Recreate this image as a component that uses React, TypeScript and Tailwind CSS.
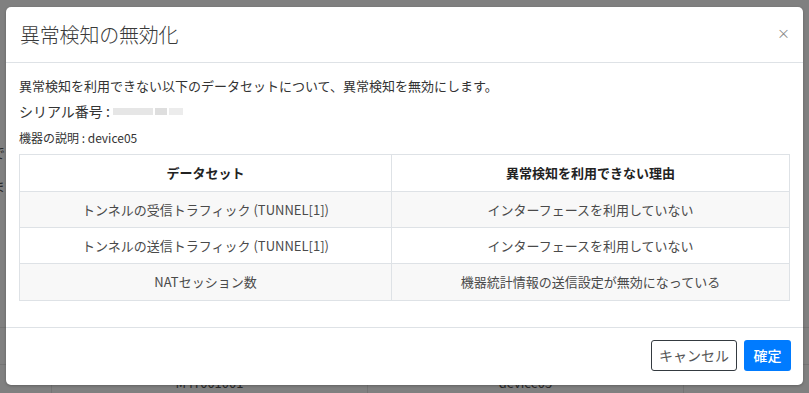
import React from "react";

const rows = [
  { ds: "トンネルの受信トラフィック (TUNNEL[1])", reason: "インターフェースを利用していない", striped: true },
  { ds: "トンネルの送信トラフィック (TUNNEL[1])", reason: "インターフェースを利用していない", striped: false },
  { ds: "NATセッション数", reason: "機器統計情報の送信設定が無効になっている", striped: true },
];

export default function App() {
  return (
    <div
      className="relative w-[809px] h-[393px] overflow-hidden bg-[#808080] text-[#333]"
      style={{ fontFamily: '"Noto Sans CJK JP", "Noto Sans", sans-serif' }}
    >
      {/* dimmed background page */}
      <div className="flex flex-col w-full h-full text-[#2a2a2a]">
        <div className="h-[146px]" />
        <div className="ml-[-9px] text-[14px] leading-[20px] h-[36px]">でき</div>
        <div className="ml-[-9px] text-[14px] leading-[20px] h-[155px]">ます</div>
        <div className="h-[39px] border-t border-[#747474]" />
        <div className="flex-1 border-t border-[#747474] flex text-[13px] text-[#2a2a2a]">
          <div className="w-[52px] border-r border-[#747474]" />
          <div className="w-[316px] border-r border-[#747474] flex justify-center pt-[8px]">M4Y001001</div>
          <div className="w-[316px] border-r border-[#747474] flex justify-center pt-[8px]">device05</div>
          <div className="flex-1" />
        </div>
      </div>

      {/* modal */}
      <div className="absolute left-[6px] top-[7px] w-[797px] h-[378px] bg-white rounded-[5px] shadow-[0_1px_3px_rgba(0,0,0,0.25)] flex flex-col">
        <div className="h-[56px] flex items-center justify-between pl-[14px] pr-[13px] border-b border-[#dee2e6]">
          <div className="text-[20px] leading-[28px] text-[#3a3a3a] tracking-[-0.2px] font-light">異常検知の無効化</div>
          <div className="text-[13px] leading-none text-[#888] mt-[-4px]">×</div>
        </div>
        <div className="flex-1 px-[13px] pt-[13px] flex flex-col">
          <div className="text-[13px] leading-[20px] h-[20px]">
            異常検知を利用できない以下のデータセットについて、異常検知を無効にします。
          </div>
          <div className="mt-[5px] text-[14px] leading-[20px] h-[20px] flex items-center">
            <span>シリアル番号 :</span>
            <span className="ml-[3px] flex gap-[2px] items-center">
              <span className="w-[40px] h-[7px] bg-[#e6e6e6]" />
              <span className="w-[12px] h-[7px] bg-[#dedede]" />
              <span className="w-[14px] h-[7px] bg-[#ececec]" />
            </span>
          </div>
          <div className="mt-[7px] text-[12px] leading-[20px] h-[20px]">機器の説明 : device05</div>
          <div className="mt-[6px] border border-[#dee2e6]">
            <div className="flex h-[37px] border-b border-[#dee2e6] text-[13px] font-bold text-[#222]">
              <div className="w-[372px] border-r border-[#dee2e6] flex items-center justify-center">データセット</div>
              <div className="flex-1 flex items-center justify-center">異常検知を利用できない理由</div>
            </div>
            {rows.map((r, i) => (
              <div
                key={i}
                className={`flex h-[36px] text-[13px] text-[#4a4a4a] ${i < rows.length - 1 ? "border-b border-[#dee2e6]" : ""} ${r.striped ? "bg-[#f8f8f8]" : "bg-white"}`}
              >
                <div className="w-[372px] border-r border-[#dee2e6] flex items-center justify-center">{r.ds}</div>
                <div className="flex-1 flex items-center justify-center">{r.reason}</div>
              </div>
            ))}
          </div>
        </div>
        <div className="h-[58px] border-t border-[#dee2e6] flex items-center justify-end pr-[12px] gap-[7px] pb-[2px]">
          <button className="h-[31px] w-[86px] border border-[#343a40] rounded-[3px] text-[14px] text-[#555] bg-white">
            キャンセル
          </button>
          <button className="h-[31px] w-[47px] rounded-[3px] text-[14px] text-white font-medium bg-[#007bff]">
            確定
          </button>
        </div>
      </div>
    </div>
  );
}
